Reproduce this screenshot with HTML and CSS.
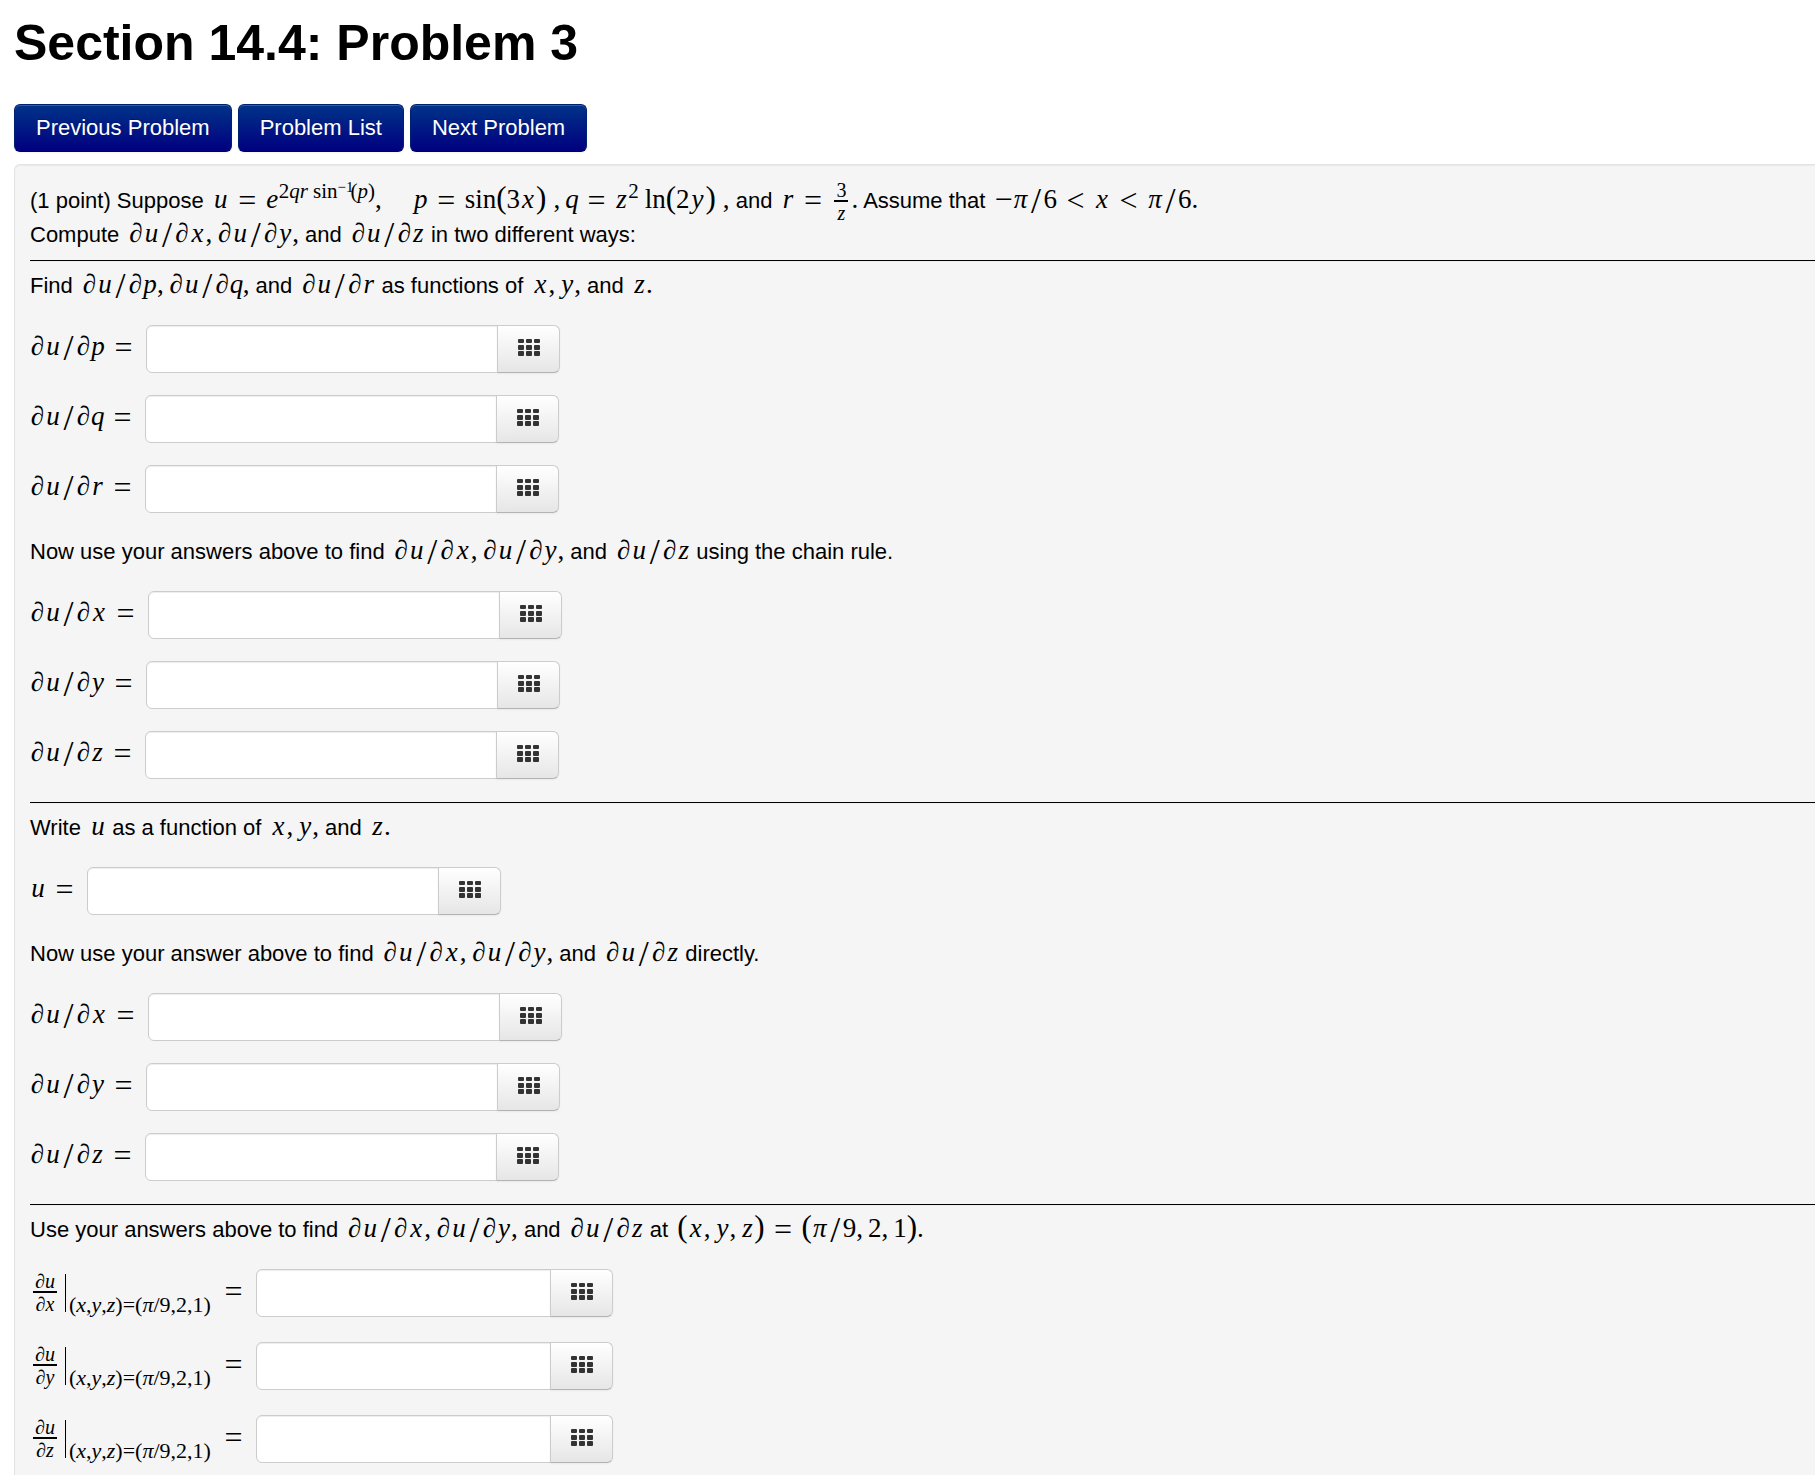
FILE: index.html
```html
<!DOCTYPE html>
<html lang="en">
<head>
<meta charset="utf-8">
<meta name="viewport" content="width=device-width, initial-scale=1">
<title>Section 14.4: Problem 3</title>
<link rel="stylesheet" href="styles.css">
</head>
<body>
<svg width="0" height="0" class="sprite" aria-hidden="true">
  <symbol id="grid" viewBox="0 0 22 17">
    <rect x="0" y="0" width="6" height="4" rx="1"/><rect x="8" y="0" width="6" height="4" rx="1"/><rect x="16" y="0" width="6" height="4" rx="1"/>
    <rect x="0" y="6" width="6" height="5" rx="1"/><rect x="8" y="6" width="6" height="5" rx="1"/><rect x="16" y="6" width="6" height="5" rx="1"/>
    <rect x="0" y="12" width="6" height="5" rx="1"/><rect x="8" y="12" width="6" height="5" rx="1"/><rect x="16" y="12" width="6" height="5" rx="1"/>
  </symbol>
</svg>
<header>
  <h1>Section 14.4: Problem 3</h1>
  <nav class="nav">
    <a class="nav-btn" href="#prev">Previous Problem</a>
    <a class="nav-btn" href="#list">Problem List</a>
    <a class="nav-btn" href="#next">Next Problem</a>
  </nav>
</header>
<main class="problem">
  <p>(1 point) Suppose <span class="math"><i class="w">u</i><span class="rel">=</span><i class="n">e</i><span class="sup"><span>2</span><i>q</i><i>r</i><span class="op">sin</span><span class="supsup">−1</span><span class="arg">(<i>p</i>)</span></span><span class="comma">,</span><span class="quad"></span><i>p</i><span class="rel">=</span><span>sin</span><span class="par">(</span><span>3</span><i class="w">x</i><span class="par">)</span><span class="comma thin">,</span><i class="n">q</i><span class="rel">=</span><i class="n">z</i><span class="sup">2</span><span class="fn">ln</span><span class="par">(</span><span>2</span><i class="w">y</i><span class="par">)</span><span class="thin">,</span></span> and <span class="math"><i class="n">r</i><span class="rel">=</span><span class="frac"><span class="num">3</span><i class="den">z</i></span>.</span> Assume that <span class="math"><span class="neg">−</span><i class="w">π</i><span class="sl">/</span><span>6</span><span class="rel">&lt;</span><i class="w">x</i><span class="rel">&lt;</span><i class="w">π</i><span class="sl">/</span><span>6</span>.</span></p>
  <p>Compute <span class="math"><i class="d">∂</i><i class="w">u</i><span class="sl">/</span><i class="d">∂</i><i class="w">x</i><span class="comma">,</span><i class="d">∂</i><i class="w">u</i><span class="sl">/</span><i class="d">∂</i><i>y</i>,</span> and <span class="math"><i class="d">∂</i><i class="w">u</i><span class="sl">/</span><i class="d">∂</i><i class="n">z</i></span> in two different ways:</p>
  <hr>
  <p>Find <span class="math"><i class="d">∂</i><i class="w">u</i><span class="sl">/</span><i class="d">∂</i><i>p</i><span class="comma">,</span><i class="d">∂</i><i class="w">u</i><span class="sl">/</span><i class="d">∂</i><i class="n">q</i>,</span> and <span class="math"><i class="d">∂</i><i class="w">u</i><span class="sl">/</span><i class="d">∂</i><i class="n">r</i></span> as functions of <span class="math"><i class="w">x</i><span class="comma">,</span><i>y</i>,</span> and <span class="math"><i class="n">z</i>.</span></p>
  <div class="answers">
    <div class="row"><label for="a1" class="math"><i class="d">∂</i><i class="w">u</i><span class="sl">/</span><i class="d">∂</i><i>p</i><span class="rel">=</span></label><input id="a1" type="text"><button type="button" aria-label="Equation editor"><svg><use href="#grid"/></svg></button></div>
    <div class="row"><label for="a2" class="math"><i class="d">∂</i><i class="w">u</i><span class="sl">/</span><i class="d">∂</i><i class="n">q</i><span class="rel">=</span></label><input id="a2" type="text"><button type="button" aria-label="Equation editor"><svg><use href="#grid"/></svg></button></div>
    <div class="row"><label for="a3" class="math"><i class="d">∂</i><i class="w">u</i><span class="sl">/</span><i class="d">∂</i><i class="n">r</i><span class="rel">=</span></label><input id="a3" type="text"><button type="button" aria-label="Equation editor"><svg><use href="#grid"/></svg></button></div>
  </div>
  <p>Now use your answers above to find <span class="math"><i class="d">∂</i><i class="w">u</i><span class="sl">/</span><i class="d">∂</i><i class="w">x</i><span class="comma">,</span><i class="d">∂</i><i class="w">u</i><span class="sl">/</span><i class="d">∂</i><i>y</i>,</span> and <span class="math"><i class="d">∂</i><i class="w">u</i><span class="sl">/</span><i class="d">∂</i><i class="n">z</i></span> using the chain rule.</p>
  <div class="answers">
    <div class="row"><label for="a4" class="math"><i class="d">∂</i><i class="w">u</i><span class="sl">/</span><i class="d">∂</i><i class="w">x</i><span class="rel">=</span></label><input id="a4" type="text"><button type="button" aria-label="Equation editor"><svg><use href="#grid"/></svg></button></div>
    <div class="row"><label for="a5" class="math"><i class="d">∂</i><i class="w">u</i><span class="sl">/</span><i class="d">∂</i><i>y</i><span class="rel">=</span></label><input id="a5" type="text"><button type="button" aria-label="Equation editor"><svg><use href="#grid"/></svg></button></div>
    <div class="row"><label for="a6" class="math"><i class="d">∂</i><i class="w">u</i><span class="sl">/</span><i class="d">∂</i><i class="n">z</i><span class="rel">=</span></label><input id="a6" type="text"><button type="button" aria-label="Equation editor"><svg><use href="#grid"/></svg></button></div>
  </div>
  <hr>
  <p>Write <span class="math"><i class="w">u</i></span> as a function of <span class="math"><i class="w">x</i><span class="comma">,</span><i>y</i>,</span> and <span class="math"><i class="n">z</i>.</span></p>
  <div class="answers">
    <div class="row"><label for="a7" class="math"><i class="w">u</i><span class="rel">=</span></label><input id="a7" type="text"><button type="button" aria-label="Equation editor"><svg><use href="#grid"/></svg></button></div>
  </div>
  <p>Now use your answer above to find <span class="math"><i class="d">∂</i><i class="w">u</i><span class="sl">/</span><i class="d">∂</i><i class="w">x</i><span class="comma">,</span><i class="d">∂</i><i class="w">u</i><span class="sl">/</span><i class="d">∂</i><i>y</i>,</span> and <span class="math"><i class="d">∂</i><i class="w">u</i><span class="sl">/</span><i class="d">∂</i><i class="n">z</i></span> directly.</p>
  <div class="answers">
    <div class="row"><label for="a8" class="math"><i class="d">∂</i><i class="w">u</i><span class="sl">/</span><i class="d">∂</i><i class="w">x</i><span class="rel">=</span></label><input id="a8" type="text"><button type="button" aria-label="Equation editor"><svg><use href="#grid"/></svg></button></div>
    <div class="row"><label for="a9" class="math"><i class="d">∂</i><i class="w">u</i><span class="sl">/</span><i class="d">∂</i><i>y</i><span class="rel">=</span></label><input id="a9" type="text"><button type="button" aria-label="Equation editor"><svg><use href="#grid"/></svg></button></div>
    <div class="row"><label for="a10" class="math"><i class="d">∂</i><i class="w">u</i><span class="sl">/</span><i class="d">∂</i><i class="n">z</i><span class="rel">=</span></label><input id="a10" type="text"><button type="button" aria-label="Equation editor"><svg><use href="#grid"/></svg></button></div>
  </div>
  <hr>
  <p>Use your answers above to find <span class="math"><i class="d">∂</i><i class="w">u</i><span class="sl">/</span><i class="d">∂</i><i class="w">x</i><span class="comma">,</span><i class="d">∂</i><i class="w">u</i><span class="sl">/</span><i class="d">∂</i><i>y</i>,</span> and <span class="math"><i class="d">∂</i><i class="w">u</i><span class="sl">/</span><i class="d">∂</i><i class="n">z</i></span> at <span class="math"><span class="par">(</span><i class="w">x</i><span class="comma">,</span><i>y</i><span class="comma">,</span><i class="n">z</i><span class="par">)</span><span class="rel">=</span><span class="par">(</span><i class="w">π</i><span class="sl">/</span><span>9</span><span class="comma">,</span><span>2</span><span class="comma">,</span><span>1</span><span class="par">)</span>.</span></p>
  <div class="answers evaluated">
    <div class="row"><label for="a11" class="math at"><span class="frac"><i class="num">∂u</i><i class="den">∂x</i></span><span class="bar"></span><span class="sub">(<i>x</i>,<i>y</i>,<i>z</i>)=(<i>π</i>/9,2,1)</span><span class="rel">=</span></label><input id="a11" type="text"><button type="button" aria-label="Equation editor"><svg><use href="#grid"/></svg></button></div>
    <div class="row"><label for="a12" class="math at"><span class="frac"><i class="num">∂u</i><i class="den">∂y</i></span><span class="bar"></span><span class="sub">(<i>x</i>,<i>y</i>,<i>z</i>)=(<i>π</i>/9,2,1)</span><span class="rel">=</span></label><input id="a12" type="text"><button type="button" aria-label="Equation editor"><svg><use href="#grid"/></svg></button></div>
    <div class="row"><label for="a13" class="math at"><span class="frac"><i class="num">∂u</i><i class="den">∂z</i></span><span class="bar"></span><span class="sub">(<i>x</i>,<i>y</i>,<i>z</i>)=(<i>π</i>/9,2,1)</span><span class="rel">=</span></label><input id="a13" type="text"><button type="button" aria-label="Equation editor"><svg><use href="#grid"/></svg></button></div>
  </div>
</main>
</body>
</html>
```

FILE: styles.css
```css
* {
  box-sizing: border-box;
}

body {
  margin: 0;
  padding: 13px 0 0 14px;
  min-height: 100vh;
  display: flex;
  flex-direction: column;
  background: #fff;
  color: #000;
  font: 22px/34px "Liberation Sans", Arial, sans-serif;
}

.sprite {
  position: absolute;
}

h1 {
  margin: 0 0 31px;
  font-size: 50px;
  line-height: 60px;
}

.nav {
  display: flex;
  gap: 6px;
  margin-bottom: 12px;
}

.nav-btn {
  padding: 0 21px;
  border: 1px solid #002070;
  border-bottom-color: #000060;
  border-radius: 6px;
  background: linear-gradient(#003388, #000080);
  box-shadow: inset 0 1px 0 rgba(255, 255, 255, 0.2), 0 1px 2px rgba(0, 0, 0, 0.05);
  color: #fff;
  line-height: 46px;
  text-decoration: none;
  text-shadow: 0 -1px 0 rgba(0, 0, 0, 0.25);
}

.problem {
  flex: 1;
  padding: 19px 0 0 15px;
  border: 1px solid #e3e3e3;
  border-width: 1px 0 0 1px;
  border-radius: 6px 0 0 0;
  background: #f5f5f5;
  box-shadow: inset 0 1px 1px rgba(0, 0, 0, 0.05);
}

p {
  margin: 0;
}

hr {
  margin: 8px 0 7px;
  border: solid #000;
  border-width: 1px 0;
  border-bottom-color: #eee;
}

.answers + hr {
  margin-top: 23px;
}

/* Formulas */

.math {
  font-family: "Liberation Serif", "Times New Roman", serif;
  font-size: 27px;
  line-height: 0;
  white-space: nowrap;
}

p .math {
  margin-left: 3px;
}

.math > i {
  display: inline-block;
  width: 14px;
  text-align: center;
}

.math > .w {
  width: 16px;
}

.math > .d {
  width: 15px;
}

.math > .n {
  width: 13px;
}

.sl {
  display: inline-block;
  width: 15px;
  font-size: 36px;
  vertical-align: -5px;
  text-align: center;
}

.rel {
  display: inline-block;
  width: 21px;
  margin: 0 8px;
  font-size: 32px;
  vertical-align: -3px;
  text-align: center;
}

.comma {
  margin-right: 5px;
}

.thin {
  margin-left: 7px;
}

.quad {
  margin-right: 27px;
}

.par {
  font-size: 31px;
}

.neg {
  font-size: 32px;
  vertical-align: -2px;
}

.fn {
  margin-left: 6px;
}

.sup {
  font-size: 21px;
  vertical-align: 10px;
}

.op {
  margin-left: 5px;
}

.supsup {
  font-size: 15px;
  vertical-align: 6px;
}

.arg {
  margin-left: -3px;
}

.frac {
  display: inline-flex;
  flex-direction: column;
  align-items: center;
  vertical-align: 11px;
  margin: -4px 3px -12px;
  font-size: 20px;
  line-height: 17px;
}

.num {
  padding: 0 2px 1px;
  border-bottom: 2px solid #000;
}

.den {
  padding-top: 3px;
}

/* Answer rows */

.answers {
  display: flex;
  flex-direction: column;
  gap: 22px;
  margin: 22px 0;
}

.evaluated {
  gap: 25px;
  margin-bottom: 0;
}

.row {
  display: flex;
  align-items: flex-start;
}

.row label {
  line-height: 42px;
  height: 48px;
  margin-right: 4px;
}

.row .sl,
.row .rel {
  line-height: 0;
}

input,
button {
  height: 48px;
  margin: 0;
  border: 1px solid #ccc;
}

input {
  width: 352px;
  padding: 6px 9px;
  border-radius: 6px 0 0 6px;
  background: #fff;
  box-shadow: inset 0 1px 1px rgba(0, 0, 0, 0.075);
  font: inherit;
}

.evaluated input {
  width: 295px;
}

button {
  display: flex;
  justify-content: center;
  width: 63px;
  margin-left: -1px;
  padding: 13px 0 0;
  border-bottom-color: #b3b3b3;
  border-radius: 0 6px 6px 0;
  background: linear-gradient(#fff, #e6e6e6);
  box-shadow: inset 0 1px 0 rgba(255, 255, 255, 0.2), 0 1px 2px rgba(0, 0, 0, 0.05);
}

button svg {
  width: 22px;
  height: 17px;
  fill: #333;
}

.row .at {
  display: flex;
  align-items: flex-start;
  width: 222px;
}

.at .frac {
  margin: 0 4px 0 3px;
  padding-top: 4px;
}

.at .bar {
  width: 1px;
  height: 38px;
  margin: 5px 3px 0 4px;
  background: #000;
}

.at .sub {
  flex: 1;
  padding-top: 25px;
  font-size: 22px;
  line-height: 22px;
}

.row .at .rel {
  line-height: 44px;
}
```
